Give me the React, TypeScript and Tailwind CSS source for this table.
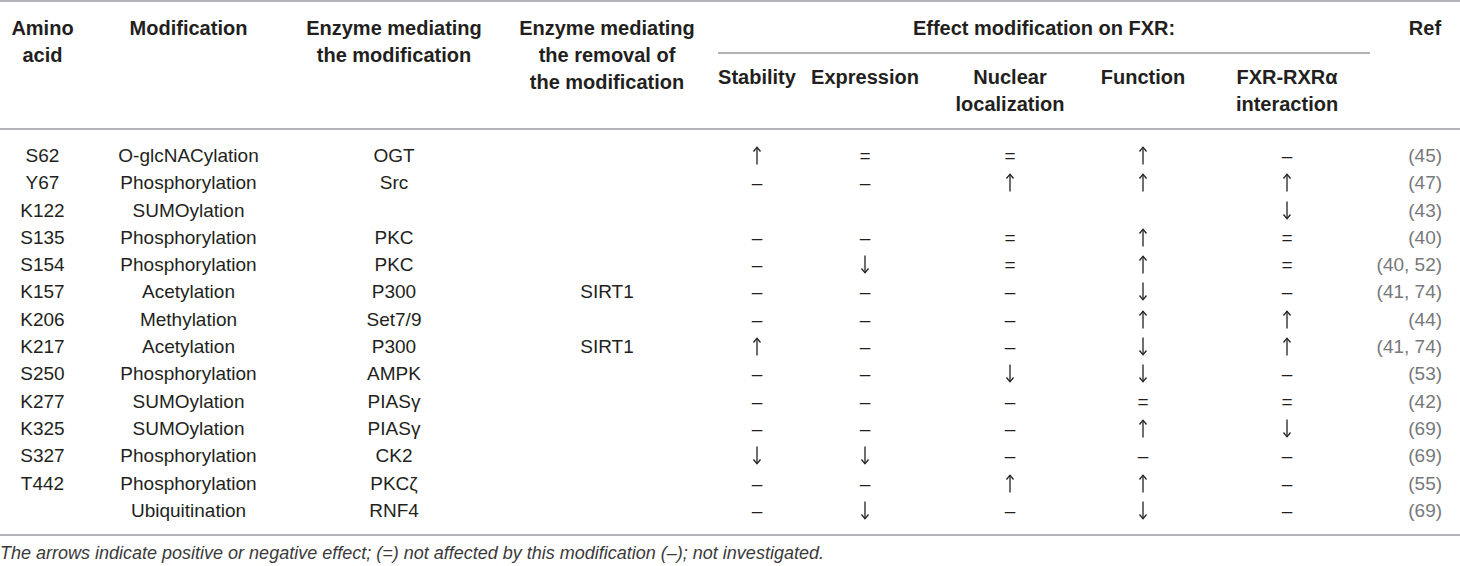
import React from "react";

type Row = string[];

const rows: Row[] = [
  ["S62", "O-glcNACylation", "OGT", "", "↑", "=", "=", "↑", "–", "(45)"],
  ["Y67", "Phosphorylation", "Src", "", "–", "–", "↑", "↑", "↑", "(47)"],
  ["K122", "SUMOylation", "", "", "", "", "", "", "↓", "(43)"],
  ["S135", "Phosphorylation", "PKC", "", "–", "–", "=", "↑", "=", "(40)"],
  ["S154", "Phosphorylation", "PKC", "", "–", "↓", "=", "↑", "=", "(40, 52)"],
  ["K157", "Acetylation", "P300", "SIRT1", "–", "–", "–", "↓", "–", "(41, 74)"],
  ["K206", "Methylation", "Set7/9", "", "–", "–", "–", "↑", "↑", "(44)"],
  ["K217", "Acetylation", "P300", "SIRT1", "↑", "–", "–", "↓", "↑", "(41, 74)"],
  ["S250", "Phosphorylation", "AMPK", "", "–", "–", "↓", "↓", "–", "(53)"],
  ["K277", "SUMOylation", "PIASγ", "", "–", "–", "–", "=", "=", "(42)"],
  ["K325", "SUMOylation", "PIASγ", "", "–", "–", "–", "↑", "↓", "(69)"],
  ["S327", "Phosphorylation", "CK2", "", "↓", "↓", "–", "–", "–", "(69)"],
  ["T442", "Phosphorylation", "PKCζ", "", "–", "–", "↑", "↑", "–", "(55)"],
  ["", "Ubiquitination", "RNF4", "", "–", "↓", "–", "↓", "–", "(69)"],
];

const colWidths = [
  "w-[85px]",
  "w-[207px]",
  "w-[204px]",
  "w-[222px]",
  "w-[78px]",
  "w-[138px]",
  "w-[152px]",
  "w-[114px]",
  "w-[174px]",
  "w-[86px]",
];

// thin arrow drawn like the typeset glyph in the table
const Arrow = ({ down }: { down?: boolean }) => (
  <svg
    width="10"
    height="19"
    viewBox="0 0 10 19"
    className={`inline-block align-[-3px] ${down ? "rotate-180" : ""}`}
    fill="none"
    stroke="#231f20"
    strokeWidth="1.3"
  >
    <path d="M5 1.5V18.5" />
    <path d="M1.5 5.5L5 1.2L8.5 5.5" />
  </svg>
);

const Cell = ({ value }: { value: string }) => {
  if (value === "↑") return <Arrow />;
  if (value === "↓") return <Arrow down />;
  return <>{value}</>;
};

const App = () => {
  return (
    <div className="w-[1460px] bg-white font-['Liberation_Sans',Arial,sans-serif] text-[#231f20]">
      <table className="w-[1460px] table-fixed border-collapse border-y-2 border-[#b1b3b6]">
        <colgroup>
          {colWidths.map((w, i) => (
            <col key={i} className={w} />
          ))}
        </colgroup>
        <thead className="text-[20px] font-bold leading-[27px]">
          <tr className="h-[51px]">
            <th rowSpan={2} className="pt-[13px] align-top border-b-2 border-[#b1b3b6]">
              Amino
              <br />
              acid
            </th>
            <th rowSpan={2} className="pt-[13px] align-top border-b-2 border-[#b1b3b6]">
              Modification
            </th>
            <th rowSpan={2} className="pt-[13px] align-top border-b-2 border-[#b1b3b6]">
              Enzyme mediating
              <br />
              the modification
            </th>
            <th rowSpan={2} className="pt-[13px] align-top border-b-2 border-[#b1b3b6]">
              Enzyme mediating
              <br />
              the removal of
              <br />
              the modification
            </th>
            <th colSpan={5} className="p-0 align-top">
              <div className="pt-[13px] pb-[10px] mr-[4px] border-b-2 border-[#b1b3b6]">
                Effect modification on FXR:
              </div>
            </th>
            <th rowSpan={2} className="pt-[13px] pr-[19px] text-right align-top border-b-2 border-[#b1b3b6]">
              Ref
            </th>
          </tr>
          <tr className="h-[75px]">
            <th className="pt-[10px] align-top border-b-2 border-[#b1b3b6]">Stability</th>
            <th className="pt-[10px] align-top border-b-2 border-[#b1b3b6]">Expression</th>
            <th className="pt-[10px] align-top border-b-2 border-[#b1b3b6]">
              Nuclear
              <br />
              localization
            </th>
            <th className="pt-[10px] align-top border-b-2 border-[#b1b3b6]">Function</th>
            <th className="pt-[10px] align-top border-b-2 border-[#b1b3b6]">
              FXR-RXRα
              <br />
              interaction
            </th>
          </tr>
        </thead>
        <tbody className="text-[19px] leading-[27.3px]">
          {rows.map((r, ri) => {
            const first = ri === 0;
            const last = ri === rows.length - 1;
            return (
              <tr key={ri}>
                {r.map((cell, ci) => (
                  <td
                    key={ci}
                    className={`p-0 align-top ${first ? "pt-[12px]" : ""} ${last ? "pb-[10px]" : ""} ${
                      ci === 9 ? "pr-[18px] text-right text-[#77787b]" : "text-center"
                    }`}
                  >
                    <Cell value={cell} />
                  </td>
                ))}
              </tr>
            );
          })}
        </tbody>
      </table>
      <p className="mt-[6px] text-[18px] italic leading-[22px] text-[#3a3a3a]">
        The arrows indicate positive or negative effect; (=) not affected by this modification (–); not investigated.
      </p>
    </div>
  );
};

export default App;
